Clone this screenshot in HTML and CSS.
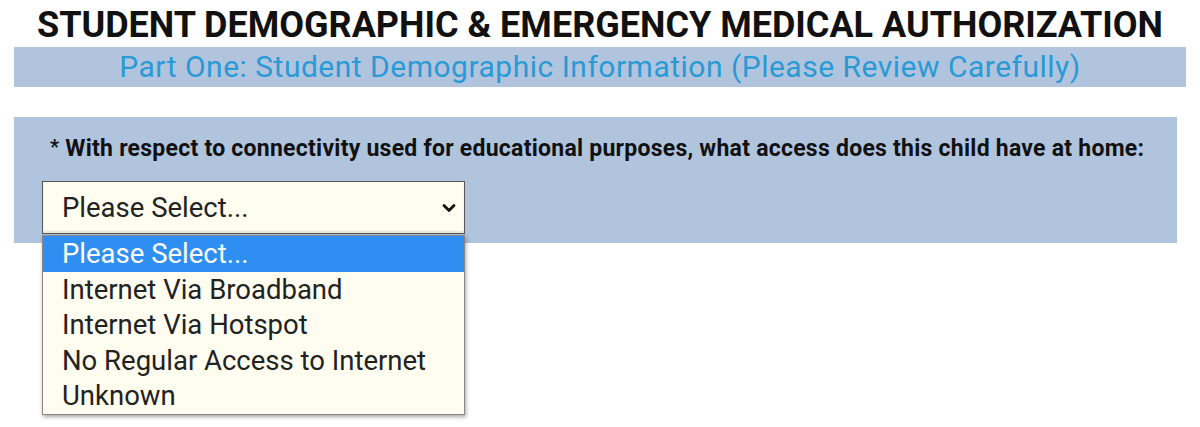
FILE: index.html
```html
<!DOCTYPE html>
<html>
<head>
<meta charset="utf-8">
<link rel="stylesheet" href="styles.css">
</head>
<body>
<div class="page">
  <h1 class="title">STUDENT DEMOGRAPHIC &amp; EMERGENCY MEDICAL AUTHORIZATION</h1>
  <div class="banner">Part One: Student Demographic Information (Please Review Carefully)</div>
  <div class="panel">
    <div class="question"><span class="star">*</span> With respect to connectivity used for educational purposes, what access does this child have at home:</div>
    <div class="select-wrap">
      <div class="select">
        <span>Please Select...</span>
        <svg class="chev" width="14" height="10" viewBox="0 0 14 10"><path d="M2 2.5 L7 7.5 L12 2.5" fill="none" stroke="#111" stroke-width="2.8" stroke-linecap="round" stroke-linejoin="round"/></svg>
      </div>
      <ul class="menu">
        <li class="opt active">Please Select...</li>
        <li class="opt">Internet Via Broadband</li>
        <li class="opt">Internet Via Hotspot</li>
        <li class="opt">No Regular Access to Internet</li>
        <li class="opt">Unknown</li>
      </ul>
    </div>
  </div>
</div>
</body>
</html>
```
FILE: styles.css
```css
html, body {
  margin: 0;
  padding: 0;
  background: #ffffff;
  font-family: Roboto, "Liberation Sans", sans-serif;
}
body {
  min-height: 427px;
}
.page {
  padding: 5px 14px 0 14px;
  min-height: 427px;
  box-sizing: border-box;
}
.title {
  margin: 0;
  font-size: 36px;
  font-weight: 700;
  color: #111;
  text-align: center;
  line-height: 40px;
}
.banner {
  margin-top: 2px;
  height: 40px;
  background: #b0c4de;
  color: #2a9ad6;
  font-size: 30px;
  letter-spacing: 0.5px;
  line-height: 40px;
  text-align: center;
}
.panel {
  margin-top: 30px;
  margin-right: 9px;
  height: 126px;
  background: #b0c4de;
  padding: 19px 0 0 36px;
  box-sizing: border-box;
}
.question {
  font-size: 23px;
  font-weight: 700;
  color: #111;
  line-height: 26px;
  letter-spacing: 0.25px;
}
.star {
  font-size: 20px;
  line-height: 0;
  vertical-align: 2px;
}
.select-wrap {
  position: relative;
  margin-top: 19px;
  margin-left: -8px;
  width: 423px;
}
.select {
  box-sizing: border-box;
  height: 53px;
  background: #fffdf0;
  border: 1px solid #555;
  display: flex;
  align-items: center;
  justify-content: space-between;
  padding: 0 8px 0 19px;
  font-size: 27.5px;
  color: #222;
  box-shadow: inset 0 -2px 2px rgba(0,0,0,0.1);
}
.chev {
  display: block;
}
.menu {
  position: absolute;
  left: 0;
  top: 54px;
  width: 423px;
  box-sizing: border-box;
  margin: 0;
  padding: 0;
  list-style: none;
  background: #fffdf0;
  border: 1px solid #888;
  box-shadow: 1px 2px 4px rgba(0,0,0,0.35);
}
.opt {
  height: 35.6px;
  line-height: 35.6px;
  padding-left: 19px;
  font-size: 27.5px;
  color: #222;
}
.opt.active {
  background: #2f8ef2;
  color: #fff;
}
```
